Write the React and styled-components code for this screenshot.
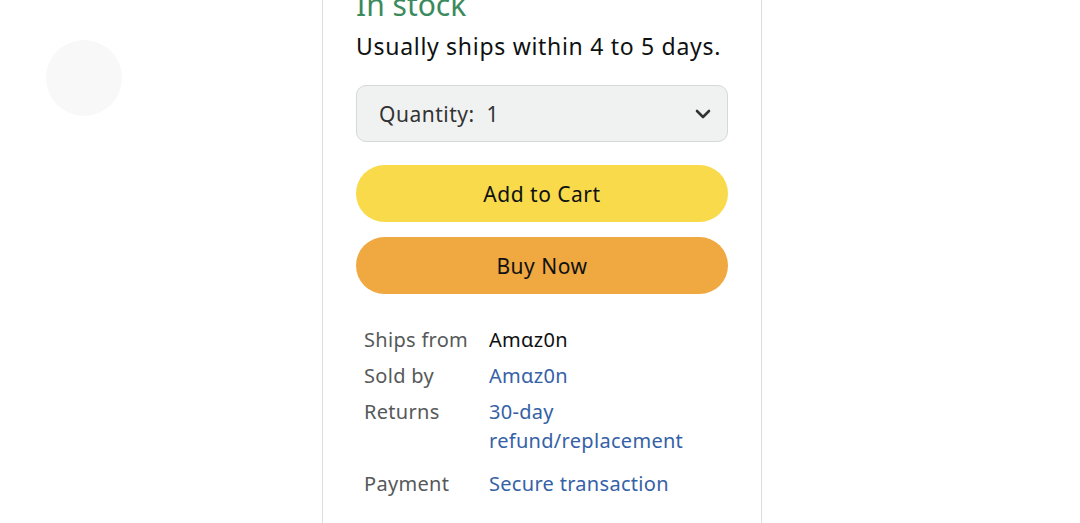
import styled, { createGlobalStyle } from "styled-components";

const Global = createGlobalStyle`
  html, body {
    margin: 0;
    padding: 0;
    background: #ffffff;
    font-family: "Noto Sans", "Open Sans", sans-serif;
    overflow: hidden;
  }
`;

const Page = styled.div`
  display: flex;
  align-items: flex-start;
  height: 523px;
`;

const Avatar = styled.div`
  width: 76px;
  height: 76px;
  border-radius: 50%;
  background: #f8f8f8;
  margin: 40px 0 0 46px;
`;

const Card = styled.div`
  margin-left: 200px;
  width: 372px;
  height: 523px;
  padding: 0 33px;
  border-left: 1px solid #dddddd;
  border-right: 1px solid #dddddd;
`;

const Stock = styled.div`
  margin-top: -13px;
  font-size: 30px;
  line-height: 36px;
  color: #3b8a5d;
`;

const Ships = styled.div`
  margin-top: 7px;
  font-size: 23px;
  letter-spacing: 0.7px;
  line-height: 32px;
  color: #0f1111;
`;

const Select = styled.div`
  margin-top: 23px;
  height: 57px;
  box-sizing: border-box;
  border: 1px solid #d5d9d9;
  border-radius: 10px;
  background: #f0f2f2;
  display: flex;
  align-items: center;
  justify-content: space-between;
  padding: 0 14px 0 22px;
  font-size: 21px;
  letter-spacing: 0.5px;
  color: #333333;
`;

const Button = styled.div`
  height: 57px;
  border-radius: 29px;
  background: ${(p) => p.$bg};
  display: flex;
  align-items: center;
  justify-content: center;
  font-size: 21px;
  letter-spacing: 0.5px;
  color: #0f1111;
  margin-top: ${(p) => p.$top}px;
`;

const Details = styled.div`
  margin-top: 31px;
  padding-left: 8px;
  display: grid;
  grid-template-columns: 125px 1fr;
  row-gap: 7px;
  font-size: 20px;
  letter-spacing: 0.3px;
  line-height: 29px;
`;

const Label = styled.div`
  color: #565959;
`;

const Value = styled.div`
  color: ${(p) => (p.$link ? "#3561a6" : "#0f1111")};
  padding-bottom: ${(p) => p.$extra || 0}px;
`;

export default function App() {
  return (
    <>
      <Global />
      <Page>
        <Avatar />
        <Card>
          <Stock>In stock</Stock>
          <Ships>Usually ships within 4 to 5 days.</Ships>
          <Select>
            <span>Quantity:&nbsp; 1</span>
            <svg width="20" height="20" viewBox="0 0 20 20">
              <path d="M4 7l6 6 6-6" fill="none" stroke="#333" strokeWidth="2.6" strokeLinecap="round" strokeLinejoin="round" />
            </svg>
          </Select>
          <Button $bg="#f8da4b" $top={23}>Add to Cart</Button>
          <Button $bg="#f0a840" $top={15}>Buy Now</Button>
          <Details>
            <Label>Ships from</Label>
            <Value>Amαz0n</Value>
            <Label>Sold by</Label>
            <Value $link>Amαz0n</Value>
            <Label>Returns</Label>
            <Value $link $extra={7}>30-day<br />refund/replacement</Value>
            <Label>Payment</Label>
            <Value $link>Secure transaction</Value>
          </Details>
        </Card>
      </Page>
    </>
  );
}
